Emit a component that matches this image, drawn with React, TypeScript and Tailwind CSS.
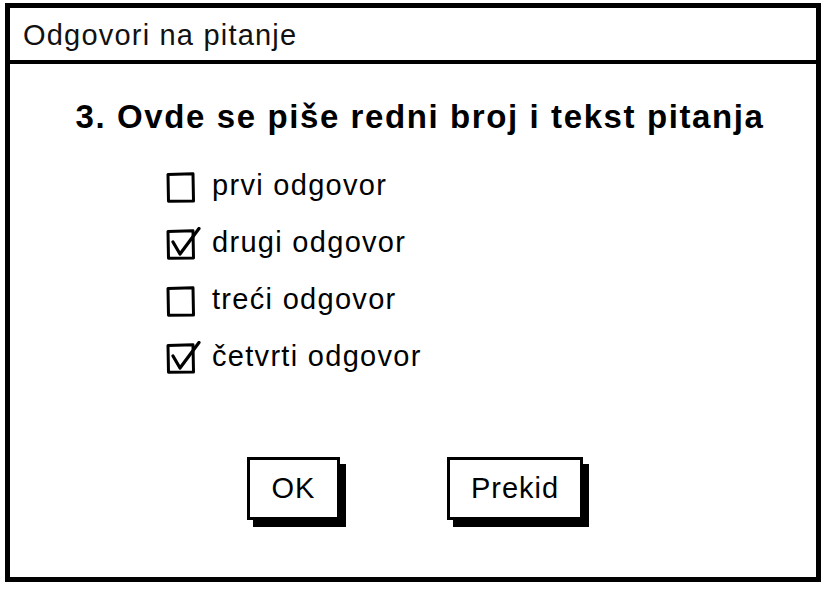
import React from 'react';

const answers = [
  { label: 'prvi odgovor', checked: false },
  { label: 'drugi odgovor', checked: true },
  { label: 'treći odgovor', checked: false },
  { label: 'četvrti odgovor', checked: true },
];

const SketchCheckbox: React.FC<{ checked: boolean }> = ({ checked }) => (
  <svg width="36" height="34" viewBox="0 0 36 34" className="shrink-0">
    <path
      d="M2 4.5 L27 3.8 L27.5 31 L2.5 31.2 Z"
      fill="white"
      stroke="#000"
      strokeWidth="3"
      strokeLinejoin="round"
    />
    {checked && (
      <path
        d="M7 15 L14 27 L33 1.5"
        fill="none"
        stroke="#000"
        strokeWidth="3.2"
        strokeLinecap="round"
        strokeLinejoin="round"
      />
    )}
  </svg>
);

const SketchButton: React.FC<{ label: string; width: string }> = ({ label, width }) => (
  <button
    className={`${width} h-[63px] bg-white border-[3px] border-black shadow-[6px_7px_0_0_#000] text-[29px] tracking-[1px] text-black leading-none`}
  >
    {label}
  </button>
);

export default function App() {
  return (
    <div
      className="w-[828px] h-[590px] bg-white pt-[3px] pl-[5px]"
      style={{ fontFamily: '"Liberation Sans", Arial, sans-serif' }}
    >
      <div className="w-[816px] h-[579px] border-[5px] border-black flex flex-col">
        {/* Title bar */}
        <div className="h-[56px] border-b-4 border-black flex items-center pl-[13px] pt-[3px]">
          <span className="text-[29px] tracking-[1.2px] text-[#111] leading-none">
            Odgovori na pitanje
          </span>
        </div>

        {/* Question */}
        <h1 className="mt-[36px] text-center pl-[14px] text-[33px] font-bold tracking-[1.6px] leading-none text-black">
          3. Ovde se piše redni broj i tekst pitanja
        </h1>

        {/* Answers */}
        <div className="mt-[25px] pl-[156px] flex flex-col">
          {answers.map(a => (
            <div key={a.label} className="h-[57px] flex items-center gap-[10px]">
              <SketchCheckbox checked={a.checked} />
              <span className="text-[29px] tracking-[1.3px] leading-none text-black pb-[2px]">
                {a.label}
              </span>
            </div>
          ))}
        </div>

        {/* Buttons */}
        <div className="mt-[71px] flex justify-center gap-[107px] pl-[4px]">
          <SketchButton label="OK" width="w-[93px]" />
          <SketchButton label="Prekid" width="w-[136px]" />
        </div>
      </div>
    </div>
  );
}
